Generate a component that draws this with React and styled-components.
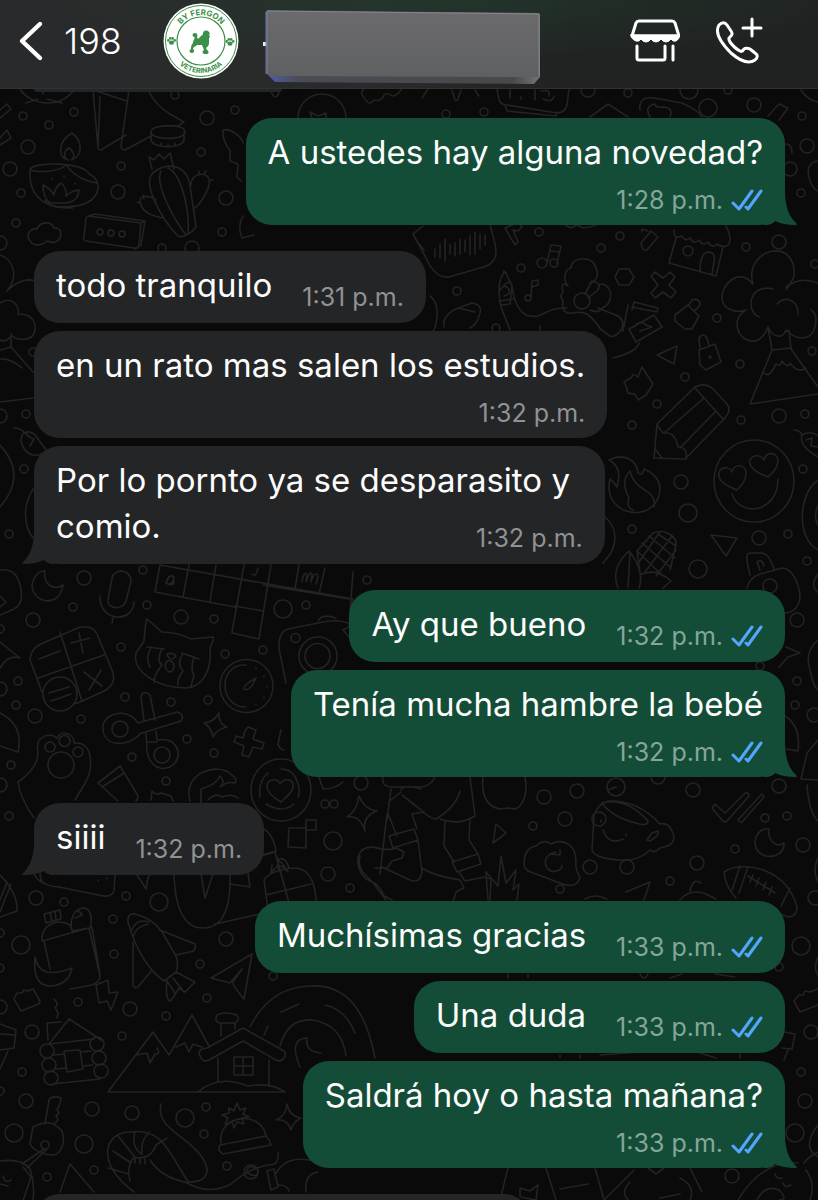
import React from 'react';
import styled, { createGlobalStyle, css } from 'styled-components';

const GlobalStyle = createGlobalStyle`
  * {
    box-sizing: border-box;
  }

  body {
    margin: 0;
    background: #0a0a0a;
    font-family: Inter, "Liberation Sans", sans-serif;
  }
`;

const colors = {
  incoming: '#242527',
  outgoing: '#144d37',
  tick: '#53a6fd',
};

const Page = styled.div`
  display: flex;
  flex-direction: column;
  height: 100vh;
  overflow: hidden;
  background: #0a0a0a;
`;

const Header = styled.header`
  display: flex;
  align-items: center;
  height: 89px;
  flex-shrink: 0;
  padding: 0 53px 6px 18px;
  border-bottom: 1px solid #303132;
  background:
    radial-gradient(ellipse 420px 60px at 56% 0, rgba(32, 62, 46, 0.6), transparent),
    linear-gradient(90deg, #292a2b 0%, #292b2b 45%, #212222 70%, #202121 100%);
`;

const BackButton = styled.button`
  display: flex;
  align-items: center;
  gap: 20px;
  padding: 0;
  border: 0;
  background: none;
  color: #fff;
  font-family: inherit;
  font-size: 36px;
  font-weight: 300;
  line-height: 40px;
  cursor: pointer;
`;

const Contact = styled.div`
  display: flex;
  flex: 1;
  align-items: center;
  gap: 24px;
  margin-left: 41px;
`;

const Actions = styled.div`
  display: flex;
  align-items: center;
  gap: 35px;
`;

const IconButton = styled.button`
  display: flex;
  padding: 0;
  border: 0;
  background: none;
  color: #fff;
  cursor: pointer;
`;

const Chat = styled.main`
  position: relative;
  display: flex;
  flex: 1;
  flex-direction: column;
  gap: 26px;
  overflow: hidden;
  padding: 0 33px 0 34px;
`;

const Backdrop = styled.svg`
  position: absolute;
  inset: 0;
  width: 100%;
  height: 100%;
  fill: none;
  stroke: #232324;
  stroke-width: 1.6;
  stroke-linecap: round;
  stroke-linejoin: round;
`;

const Group = styled.section`
  position: relative;
  display: flex;
  flex-direction: column;
  align-items: ${props => (props.$mine ? 'flex-end' : 'flex-start')};
  gap: 8px;
`;

const Bubble = styled.article`
  position: relative;
  max-width: 80%;
  padding: ${props => (props.$stacked ? '11px 22px' : '11px 22px 15px')};
  border-radius: 26px;
  background: ${props => (props.$mine ? colors.outgoing : colors.incoming)};
  ${props => props.$wide && css`
    width: 76%;
  `}
`;

const LastRow = styled.div`
  display: flex;
  flex-direction: ${props => (props.$stacked ? 'column' : 'row')};
  align-items: flex-end;
  justify-content: space-between;
  gap: ${props => (props.$stacked ? '9px' : '30px')};
`;

const Text = styled.p`
  margin: 0;
  color: #fcfcfc;
  font-size: 33px;
  line-height: 46px;
`;

const Meta = styled.div`
  display: flex;
  align-items: center;
  gap: 8px;
  height: 32px;
  margin-bottom: ${props => (props.$stacked ? '-2px' : '-5px')};
  color: ${props => (props.$mine ? '#86a698' : '#919293')};
  font-size: 25px;
  line-height: 32px;
  white-space: nowrap;
`;

const TailShape = styled.svg`
  position: absolute;
  bottom: 0;
  fill: ${props => (props.$mine ? colors.outgoing : colors.incoming)};
  ${props => (props.$mine ? 'right: -13px;' : 'left: -13px; transform: scaleX(-1);')}
`;

// edge of a message that is scrolled mostly out of view
const PartialBubble = styled.div`
  width: ${props => (props.$last ? '66%' : '33%')};
  height: ${props => (props.$last ? '72px' : '3px')};
  border-radius: ${props => (props.$last ? '26px' : '0 0 26px 26px')};
  background: ${colors.incoming};
`;

const groups = [
  {
    mine: true,
    messages: [{ lines: ['A ustedes hay alguna novedad?'], time: '1:28 p.m.', stacked: true }],
  },
  {
    mine: false,
    messages: [
      { lines: ['todo tranquilo'], time: '1:31 p.m.' },
      { lines: ['en un rato mas salen los estudios.'], time: '1:32 p.m.', stacked: true },
      { lines: ['Por lo pornto ya se desparasito y', 'comio.'], time: '1:32 p.m.' },
    ],
  },
  {
    mine: true,
    messages: [
      { lines: ['Ay que bueno'], time: '1:32 p.m.' },
      { lines: ['Tenía mucha hambre la bebé'], time: '1:32 p.m.', stacked: true },
    ],
  },
  {
    mine: false,
    messages: [{ lines: ['siiii'], time: '1:32 p.m.' }],
  },
  {
    mine: true,
    messages: [
      { lines: ['Muchísimas gracias'], time: '1:33 p.m.' },
      { lines: ['Una duda'], time: '1:33 p.m.' },
      { lines: ['Saldrá hoy o hasta mañana?'], time: '1:33 p.m.', stacked: true },
    ],
  },
];

// wallpaper dots, grouped by radius
const dots = {
  4: [
    [74, 112], [23, 116], [175, 95], [235, 110], [49, 125], [21, 193], [121, 166], [201, 152], [222, 232],
    [162, 248], [16, 223], [446, 114], [484, 112], [628, 93], [728, 90], [802, 116], [801, 193], [620, 236],
    [601, 248], [746, 247], [717, 318], [815, 264], [539, 232], [521, 268], [457, 291], [496, 328], [740, 364],
    [685, 377], [657, 404], [632, 425], [741, 420], [805, 414], [812, 351], [803, 469], [632, 529], [788, 534],
    [807, 561], [143, 570], [73, 607], [147, 605], [214, 619], [306, 605], [367, 580], [121, 647], [225, 654],
    [263, 650], [18, 681], [16, 705], [81, 719], [125, 697], [171, 702], [208, 700], [187, 739], [132, 757],
    [214, 753], [11, 765], [9, 816], [166, 781], [334, 804], [0, 629], [797, 681], [795, 705], [760, 666],
    [325, 804], [350, 888], [533, 826], [765, 818], [787, 816], [735, 849], [670, 881], [560, 889], [64, 902],
    [126, 896], [113, 919], [0, 933], [114, 954], [200, 964], [0, 968], [273, 976], [207, 998], [78, 1002],
    [166, 1016], [122, 1036], [22, 1072], [0, 1091], [206, 1107], [204, 1134], [227, 1166], [94, 1170],
    [47, 1177], [779, 967], [801, 1072], [26, 414], [24, 469], [9, 534], [33, 352],
  ],
  7: [
    [28, 147], [10, 169], [118, 192], [207, 118], [226, 198], [192, 248], [0, 243], [588, 90], [754, 105],
    [807, 146], [790, 169], [779, 242], [779, 416], [681, 482], [759, 538], [770, 586], [84, 578], [33, 620],
    [181, 617], [0, 689], [35, 716], [0, 785], [797, 620], [814, 715], [693, 790], [658, 777], [779, 786],
    [361, 783], [328, 874], [544, 797], [565, 819], [590, 867], [697, 863], [803, 845], [36, 898], [226, 939],
    [130, 1009], [32, 1032], [0, 1007], [26, 1101], [92, 1109], [132, 1113], [251, 1172], [811, 1032],
    [805, 1101], [732, 1176], [815, 898], [0, 416], [577, 791], [599, 819], [627, 867],
  ],
  9: [
    [689, 90], [708, 108], [688, 513], [698, 569], [283, 609], [333, 841], [159, 902], [21, 945], [185, 1118],
    [14, 1133], [84, 1144], [801, 946], [795, 1133], [616, 787],
  ],
};

const doodles = [
  // wheel and open book
  'M20 89c9 15 38 22 55 0 M43 89v5 M38 99l-12 4 M47 99l15 4',
  'M93 90l5 58q2 4 6 0l22-13 M93 90l34 11 M100 97l-2 48 M129 90l-8 56q0 4 4 4l26-14 M148 90q8 16 22 24l14 8-6 4h-12',
  // bowl
  'M151 132c0-8 34-9 34 0s-34 8-34 0v8c2 9 31 9 33 0v-8 M161 143v3 M168 144v3 M175 143v3',
  // ticket stubs
  'M0 110l7-6 4 5-11 9 M0 138l7-8 4 8-11 7',
  // lamp
  'M30 170c1-9 55-8 59 4 6 2 10 9 9 15-3 15-20 18-35 18-20 0-35-13-33-37z M30 170c9 3 28 2 36-5 5 6 12 15 31 18 M68 160c-10-2-11-18 4-27 12 9 10 24-1 27 M68 160c-6-3-3-10 1-12 6 4 6 10 2 12',
  'M43 185q7 3 11 10 1-8 7-12 6 5 5 13 5-5 13-6-1 12-13 13H50q-7-5-7-18z M45 200q2 8 28 8 M52 178v1 M64 176v1 M75 183v1',
  // cloud
  'M31 242c-7-8 0-14 6-13 3-8 15-8 17-1 9-1 8 10 3 13-4 4-7 0-10 0-5 5-14 5-16 1z',
  // cactus
  'M178 236c-15-15-38-54-24-64 13-10 33-8 36 14l6 40c-1 5-14 13-18 10z M161 171c-6 12 10 44 25 64 M168 168c14 6 22 44 20 66 M152 169l-3-12 5 3 5-6 5 5 6-6 4 16 M191 185c0-11 12-13 17-8 6 7-8 27-13 31 M156 200c-8-6-17-4-16 2 2 11 13 14 23 16',
  'M199 174v-3 M204 174l2-3 M210 180l3 0 M144 199l-1-4 M140 203l-3-1',
  // cassette box
  'M88 216l53 7-2 22q-1 4-5 3l-48-7q-3 0-2-4l2-19z M88 216l7-2 50 7-4 24-6 4 M141 223l4-2 M97 232a3 3 0 1 0 6 0 3 3 0 1 0-6 0 M108 233a3 3 0 1 0 6 0 3 3 0 1 0-6 0 M119 234a3 3 0 1 0 6 0 3 3 0 1 0-6 0',
  // fox and leaf by the first message
  'M223 130c6-2 18 5 20 13 M223 130c-1 8 3 16 7 20v11l8 3-1 13 4 4 M243 216q-6 10-1 22l12-3',
  'M0 255c12 4 20 20 7 36 M7 291c12-12 24-13 30-9 M0 303c12-8 20 4 18 11q18 0 17 16-2 11-15 9-6 0-9-5',
  'M0 340q6 3 11-4v11l22 25 M0 350l12-3 M0 359q10-1 22 9 M0 402l33-4',
  'M14 428q8 0 10 5 8-4 14 6l9 12-8 4q-14 2-18-14 0-8 5-8 3 5 8 6l-4 7 M0 445q28 30 0 62 M34 488q-14 20-5 44l4 6',
  // badge, clock, little things below the header
  'M298 118a24 24 0 0 1 48 0 M312 118l-2-6 8 4 8-3 0 5 M270 89q6 16 10 0',
  'M366 100c-10-8 0-16 6-12h30q-4 8-10 8-4-4-8-1-3 7-10 5-5 6-8 0z',
  'M422 98l6-9 M452 90l3 10q3 2 4-4l2-6 M475 90l4 6',
  'M497 89l2 10q1 6 8 6l50 8q8 0 10-8l2-16 M510 90v8 M521 97v2 M535 90v10 M541 91q10-2 8 5 M543 99q10 4 11-3 M505 105l2 6 49 5 1-4',
  'M590 117l18-13 20 13 M640 110q-2-14 14-12l28 5q16 7 20 14 M650 117q-6-10 4-13 3 4 8 3 12 0 8 10 M801 90q6 10 17 12 M768 116l11-12 9 4-9 12',
  'M786 144q6 0 6 9 M818 161q-14 2-8 20 3 8 8 10',
  // voice note
  'M413 234l12 22q10 23 24 21l31-9q20-4 15-24l-5-20 M413 234l10-8 M435 249v8 M440 244v14 M445 239v22 M450 244v10 M455 243v13 M460 239v15 M465 240v12 M470 235v20 M475 232v22 M480 234v15 M485 235v10',
  'M416 240l8 10 M505 228l14-6 3 5-4 4-5-1 5 12-3 3z M565 225l6 3 6-3 6 3 7-1 6-2',
  // notes
  'M547 263l4-18 10 1-4 17 M550 251l10 1 M537 263a4 4 0 1 0 10 0 4 4 0 1 0-10 0 M550 263a4 4 0 1 0 8 0 4 4 0 1 0-8 0 M531 297l1-16 6-1 0 5-6 2 M525 298a3 3 0 1 0 6 0 3 3 0 1 0-6 0',
  // arm with flowers
  'M510 330l-9-23q-5-25 3-34-1-4 2 0l6 13-2 18-8 1 M504 285q6-6 8 1 4 34 26 30c12-5 14-8 29-8 M500 290q4-6 8-2 4 6-4 8 M499 301l14-2',
  'M568 286c-7-8-1-18 3-18 0-12 22-12 24-2 6 10-1 17-5 17 M568 286q-8-6-5 6-4 4 0 9 M574 301a8 8 0 1 0 16 0 8 8 0 1 0-16 0 M585 294l7-13q10 2 6 9l-10 8 M600 284c14 0 14 20 2 24q-4 6-12 2 M563 301q-2 14 10 12 8-2 14 1 8 6 14 16 M598 308l20 8q8 5 3 14-6 8-11 6l-8-6',
  'M444 327q-2-12 14-19l14-5q12 2 7 13-2 8-9 12 M458 308l17 4 M430 296q8 6 7 20-1 12-4 15 M540 326v5',
  // ribbon
  'M641 243l10-12 7 6-11 13q-5 1-6-7z M648 231q-8-4-6 1',
  // shop
  'M674 230q-1 10 8 6 3 6 8 2 4 7 9 2 4 7 9 2 4 7 9 2 7 5 12 0 3-8-4-20 M676 238l-7 25 47 13 7-29 M700 271q0-18 8-19 8 0 6 10l-2 12 M683 251a5 5 0 1 0 10 0 5 5 0 1 0-10 0',
  // hexagon, cross, locks
  'M619 269h10l5 8-5 8h-10l-4-8z',
  'M651 276l4-4 8 6 7-6 5 5-6 8 7 7-5 6-8-6-8 6-4-5 7-8z',
  'M675 315l13-10 11 11-7 13-7 0-10-8z M688 306l4-6q6-2 8 3 0 4-5 7',
  'M699 350l16-6 6 18-15 8-6-5z M700 348l-1-10q4-6 8 0l2 8 M709 357a1 1 0 1 0 2 0 1 1 0 1 0-2 0',
  // hand with card
  'M632 310l2-8 24 6-1 4-25-5 M628 305l-5 26 M629 329l25-14 8 12-26 15-7-13z M634 327q6-8 12-2l6 2-12 4 M613 358q24-6 26-15',
  'M657 355l20-9-3 18z',
  'M624 382l8-5q0-5 6 0l4-10 11 17-7 11-8 5-3-6q-10 0-8-6z',
  // tree and volcano
  'M753 284c-10-35 44-49 41-8q-2 6-8 14 M753 284c-15-18-32 2-31 14 0 10 12 16 24 12 M786 287q14-11 32-4 M746 310c-15 8-10 30 6 31 8 1 14-8 16-14 5 11 15 12 18 3 12 12 30 12 30-12q-1-6-5-8 M773 289c-24-6-28 22-14 28 M777 304c10-10 22-2 21 11 M768 327l4 23-22 54 68-10 M789 330l2 19 27 38 M772 350l19-2 M764 373q5 6 12-9 4 4 6-3 6 8 8 2 8 11 16 5',
  // pencil
  'M654 458l3-34 38-37q10-5 18 2l14 15q5 6-2 14l-40 41z M695 388l29 32 M704 398l-40 35 M716 411l-36 37 M657 425l6 8q12-2 15 14 10 0 8 12 M655 449l7 9',
  // heart-eyes
  'M714 481a39 40 0 1 0 80 0 39 40 0 1 0-80 0 M737 490q-16-6-18-13c-2-10 10-12 13-5 2-9 14-8 14 1 0 8-4 12-9 17z M768 477q-16-6-18-13c-2-9 10-11 14-4 2-9 13-8 14 0 0 7-5 13-10 17z M732 494c8 24 46 19 46-15',
  'M794 430q6 0 8 5 9-5 16 1 M802 435q-4 10 16 22 M806 440l6-2-1 8 7 1 M818 480c-20 14-22 58 0 70 M818 505q-5 12 0 20',
  // flame
  'M609 460c16-8 28 1 29 13q5 3 6-4c8 3 16 10 16 20-2 36-59 29-50-10q4 3 7 8 6-20-8-27z M633 510q-7-2-4-12-9-17 1-27c5 22 28 18 24 36',
  'M605 517q16 14 6 36l-8 10',
  // corn
  'M640 573l-3-22 16-18q10-3 14 0 10 4 9 12l-6 25 M618 588q-8-20 11-37 16 20 10 37 M630 553l-2 34 M640 575q16-8 31 6l-8 7 M637 551l26 25 M642 543l28 24 M649 536l26 22 M658 534l18 12 M639 562l20-29 M645 572l27-36 M656 576l20-26',
  'M711 535l26 3-11 18z M750 575c-6-24-4-22 7-22 10-1 12 3 17 16 M760 570l-3-8q5-4 7 4 M747 588q2-10 13-14l22-6c12 0 18 20 18 30q-2 14-15 15',
  // letter tiles
  'M160 565l-5 27 80 15 M160 565l193 34-4 27 4-54 M189 565l-6 32 M216 565l-6 36 M244 565l-12 67 M271 565l-12 74-27-6 M235 606l28 5 M263 585l86 14 M299 565l-4 24 M325 568l-6 26 M349 599l-86-16',
  'M166 583q3-10 8-6-2 10-8 6 8 4 8-2 M302 582q2-12 5-7l-1 7q4-12 6-8l-1 8q4-12 7-6l-2 8 M252 574q4 4 6-6',
  // microphone, moon
  'M108 600l4-22c2-10 19-9 19 3l-5 20c-3 10-19 8-18-1z M100 596c-1 26 33 28 34 6 M113 618l-1 5',
  'M45 571q-10 0-13 14c0 18 28 24 31 0-9 6-20 0-18-14z M0 570q16-2 20 15 5 18-6 24l-14 6 M0 596l6 6-6 5 M0 642l20 16q-12-4-20 10',
  // calculator
  'M31 654q3-7 10-10l32-14q18-8 24 4l15 36q6 15-10 22l-22 10q-4 2-6 1 M31 654l-1 6 12 32 M60 632l22 69 M38 678l66-23 M39 659l21-8 M71 643l19-5 M79 633l4 20 M84 672l18 14 M101 670l-12 20 M43 694a17 17 0 1 0 34 0 17 17 0 1 0-34 0 M49 693l20-6 M51 701l20-7',
  // cat
  'M144 641q2-24 3-22l15 13q15 0 29 7l22-2q2 0-3 11c2 20-6 39-24 40-28 0-54-16-50-35z M147 647l17 2 M182 653l17 6 M151 647q-6 12-1 20 M162 649q-6 12 0 16-8 10-8 17 M183 654q-7 9 0 17-6 8-5 14 M194 657q-4 12 0 18l-3 11 M167 654q6-2 9 2-6 7-9-2z M165 667q1-8 6-6 5 3 2 9-4 5-8-3z',
  // gauge
  'M220 686a26 26 0 1 0 53 0 26 26 0 1 0-53 0 M246 665c-28-2-28 42 0 42 M244 689q-1-4 12-11-6 14-12 11z M256 668v1 M264 676v1 M267 686v1 M264 697v1 M256 704v1',
  // camera
  'M286 683l-7-34q-1-17 9-20l30-6q26-6 35 4 M318 621q4-8 18-3 M353 625l-10 5 11 13 M299 656a18 18 0 1 0 38 0 18 18 0 1 0-38 0 M305 656a12 12 0 1 0 25 0 12 12 0 1 0-25 0 M291 638a4 4 0 1 0 9 0 4 4 0 1 0-9 0',
  // scissors
  'M144 721l-3-24q2-8 9-2l5 25 M138 723l39-11q8 2 4 9l-42 13 M137 722c-10-16-37-8-34 8 2 18 26 16 36 5 M112 729a8 8 0 1 0 16 0 8 8 0 1 0-16 0 M146 733l1 18c4 26 34 20 31 0q-4-14-21-11l-1-9 M154 755a8 8 0 1 0 16 0 8 8 0 1 0-16 0 M147 742h10',
  // sparkle and plus
  'M219 713q-1 10 8 14-10 2-14 10-2-10-9-14 10-1 15-10z M245 731l3-4 8 3-3 9 11 4-2 6-9-2-4 10-7-2 2-9-10-4 2-6 7 2z',
  'M359 796q6 14 18 15-15 5-12 20-5-16-18-14 10-6 12-21z M281 730l-3 14q2 6 6 6 M0 713q24 12 18 39l-18-6',
  // paw
  'M34 818q-14-20-16-36 20-14 20-29c-4-20 15-20 19-15 4-9 18-4 17 5 20-2 20 26 10 42l-9 15 M45 747a5 5 0 1 0 10 0 5 5 0 1 0-10 0 M59 741a5 5 0 1 0 11 0 5 5 0 1 0-11 0 M73 752a5 5 0 1 0 10 0 5 5 0 1 0-10 0 M48 765a12 12 0 1 0 26 0 12 12 0 1 0-26 0',
  // cup, cap, heart token
  'M98 783l22-17 17 28q2 4-1 7 M102 787l22-14 M98 783l20 18 M151 800l1-9q4 5 9 2l10 3 2 5 M190 801c-8-28 28-40 42-26q6 4 3 8-8-2-15 4 6-5 0-11-4 9-19 13l0 14 M208 800q8-8 14-3 10-4 16 1',
  'M251 790a29 30 0 1 0 60 0 29 30 0 1 0-60 0 M268 773q-10 8-8 24 M281 769q12 0 16 12 4 10 1 16 M266 804q16 10 28 0 M281 802q-14-8-14-16c1-8 11-8 13-2 4-6 14-6 13 3q-1 6-12 15z',
  'M319 777l4 12q12 0 20-7 M289 828h17v20l-18-1z M306 820h10v10h-10z M259 826q14 6 17 25l-17 5 M258 857l17-5 16 58 M272 865l-1 8q6-9 12-6l5 5-6-9q-4-1-5-6',
  // walking legs
  'M383 777q-2 11 12 10h25q10 0 15-10 M391 789l-4 31 M401 790q3-6 20-1 M402 795l18 14q10 10 16 10 20-12 24-28 M470 777l5 39q-16 10-35 3 M391 800l10-8 M388 814l9 22 M412 814l5 15 M412 814l12-2 M387 814l-7 60 M375 868h12 M389 836l25-7 4 11-25 8z M396 848l8 4-2 6-10 3-4 6 M418 840l4 32q-2 12-12 8l-28-13 M445 821l-1 25 10 16 M470 818l-1 22 9 14 M452 862l26-8 3 10-24 8z M459 872l6 9 20-4 M422 868q12 8 38 12l4 8-8 4-3 10 M485 877l6 2-1 22',
  'M396 848c-14 6-22-6-34 2-10 10 0 28 6 30q12 4 16 16l8 4 M360 856c-4 16 10 22 14 28l12 16',
  'M488 900l-2-28 12 14 3-30 5 27 10-13-3 20 6-6-2 16',
  // apple, small arrow, cloud arrow
  'M483 777q-3 28 17 32l8-1q10 3 14-5 6-10 3-26 M496 824l10 9-13 10z',
  'M524 864q0-16 12-18c6-6 12-5 15-2 12-6 25 0 25 17-2 12 7 16 3 19-4 8-12 6-19 3l-32-12q-4-3-4-7z M556 852l-6 2c-10 8-2 20 6 17q6-1 6-6 M550 854l10 1 0-5',
  // mug
  'M592 850l2-35q6-14 17-14 28 0 49 23 8-2 12 7 7 14-12 17-6 6-10 2-12 12-32 10-24-2-26-10z M602 803q24-6 46 18 0 6-12 2-24-6-34-20z M652 833l6-2q2 4-8 10l-3-1 5-7z M601 820v2 M626 834v2 M603 830q6 16 20 9 M608 790l8-3',
  // read ticks
  'M712 808l3-4 10 9 20-20q4-1 4 3l-22 25q-3 2-5-1z M738 820l22-24q2-4 4 1l-22 25q-3 1-4-2z',
  // moon, football
  'M769 829q-12-1-14 13c0 20 30 18 29 1-8 6-17-4-15-14z M724 872c18-12 62-5 73 35q0 9-8 10l-12-4 M724 872q1 14 12 26 M740 866l-8 24 M748 867l-9 26 M790 888l-9 18 M748 876l27 17 M753 875l-3 7 M759 878l-3 8 M766 882l-3 8 M772 887l-3 8',
  'M626 892l24-10-6 18 M690 891q3-14 11-8 M680 900q10-12 26-6l10 5 M585 899q10-6 22 0 M807 785q2 28 11 36 M818 858q-6 12 0 24',
  // edges beside the outgoing bubbles
  'M786 647l14 6-12 4-9 10 M785 716q16 10 13 35l-12-2 M818 780l-17-1 6-26 11-13 M818 574q-8 10-1 18 M818 640q-14 12-8 30 3 16 8 20',
  // game pad
  'M34 874q6 12 25 13l44 9q10 1 11-6l1-15 M40 872q0 12 6 12 M98 880v1 M107 878v1 M0 875q18 18 17 36l-17 6 M0 912l11-28 M0 900l7-18 M137 875l4 6 5 8 2-12 6-5',
  // backpack
  'M42 941q-1-16 16-19 14 0 14 9l17-3 11 48q0 6-8 9l-22 4 M42 941l47-13 M89 928l3-1 8 48 M44 941l6 28 M44 914l16-4 1 9-15 4z M50 913l2 8 M55 911l1 9 M71 928q0-20 14-20 9 4 5 20 M75 918l7-3 M78 911l4 3 M35 957q4 24 37 11-3 16-20 18-20 1-17-29z',
  // rocket
  'M128 922q-1-9 7-8 17 4 27 18l14 24q3 8 0 16l-12 9q-24-17-36-59z M132 930q4-12 17-8 M134 935q2-8 14-11 M160 930l35 14q2 7-5 8l-14 3 M133 942v42q0 5 5 3l14-17 M176 972l19 10-10 10-6-4q-4 8-9 13-5-2-3-20 M173 978l11 14 M167 981l8 12',
  // sack and bottle
  'M174 875q2 54 30 53 24 0 26-42l0-12 M201 874l4 24 8-24 M215 924l45-10 M230 884l20 3-2-14 M268 910l-4-30q6-10 30-12 20 0 22 32 M266 895l45-11 M277 865l3 7 M277 860q8-5 12 8',
  // lightning, plane, brick
  'M96 985l12-5 1 13 9-1-7 18-4-9-8 2z M211 978l41-24-8 45q-12-14-11-17l9-13-12 14z',
  'M14 999l3-6 5 0 2-3 4 1 5-2 7 12q0 3-4 4l-15 6q-6-10-7-12z M54 999q6 6 1 8l3 6-1 5 M0 1024l16 6-2 18-14 2 M0 1034l15 1 M8 1051l-8 18',
  // log cabin
  'M49 1044l20-25 34 22 M48 1040l-1-17 14-1 M50 1044l44-5 M40 1051a7 7 0 1 0 14 0 7 7 0 1 0-14 0 M42 1065a7 7 0 1 0 14 0 7 7 0 1 0-14 0 M44 1078a7 7 0 1 0 14 0 7 7 0 1 0-14 0 M90 1044a7 7 0 1 0 14 0 7 7 0 1 0-14 0 M92 1058a7 7 0 1 0 14 0 7 7 0 1 0-14 0 M94 1071a7 7 0 1 0 14 0 7 7 0 1 0-14 0 M54 1055l10-1 M82 1052l9-1 M56 1069l10-1 M84 1066l9-1 M52 1084l48-5 M64 1051l16-1 3 19-16 3z',
  // mountains and house
  'M108 1092l45-60 16 23 23-40 17 31 M108 1092h177q-14-10-37-6-30-12-50 6 M136 1055l11-2 3 10 5-9q6 1 2-6 M176 1047l9-4 4 9 4-8 9 3 M218 1058v23 M269 1060v25 M200 1056c-3-6 3-8 7-8l36-20 41 23c4 6-3 12-8 9l-33-19-34 19q-7 3-9-4z M221 1023v13 M235 1024v5 M217 1015q8-4 20 0 3 6-2 8h-16q-5-2-2-8z M234 1057h19v18h-19z M243 1057v18 M234 1066h19',
  // rainbow
  'M250 1027q20-40 60-41c34-2 55 20 65 72 M280 1046q8-28 32-26 30 4 34 36 M281 1012l18-8 M264 1035l4-9 M300 1067q-12-28 7-29-2 14 14 15 M325 1005q20 4 30 28',
  // key
  'M45 1124l4-24q2-5 12-2-1 8-4 11l2 4-3 3 2 4-4 4 M33 1127c12-6 20-6 29 4 4 12-1 22-8 24-8 1-24-6-24-12z M41 1145a4 4 0 1 0 8 0 4 4 0 1 0-8 0 M44 1149l-22 15 M47 1149l-20 19 M0 1161q22-3 30 8 5 16 3 31 M23 1167l8 10-8 24 M0 1184l8 2 M3 1176q2 8 8 4',
  // shrimp
  'M134 1192c-40-30-29-60-4-60 32-4 38 18 58 50 10 0 20-2 19-14-8-30-53-36-46-64 M130 1181q-4-14 4-24 16 4 22-12l11-7 M113 1151l18 12 M108 1168l21 6 M118 1136l16 20 M135 1132q-4 14 6 22 M150 1132q-10 8-8 22 M135 1163v-5 M140 1164v-5 M145 1164v-5 M150 1160q10 16 34 22 M185 1182q24 14 46 2 20-18 44-20 4-4 3-12 M246 1172q4-10 12-2 0 10-12 2 M60 1192l10-28 24 28',
  // beanie
  'M221 1143c-4-28 40-34 45-7 M220 1145l46-9q4 4 5 9l-48 9q-6-4-3-9z M229 1108l5 3 3-8 3 7 6-2-3 6 6 3-7 1 2 6-7-2-3 6-2-6-7 2 3-6-6-3 7-2z M287 1104q2 12 14 14-8 4-10 12-4-12-15-10 10-4 11-16z',
  'M267 1171l7-2 4 18-7 3z M276 1173c10-18 30-14 40-12 M279 1185q8 0 10 6 M306 1192q-2-18 12-20',
  // small things along the right margin
  'M818 957q-6 12 2 22 M794 1001l5-6 4 0 2-4 5 1 8-3 M794 1001l6 11 18-7 M785 1032l10 2-3 15-10-1 M788 1050l-4 10 M818 1125q-14 18-5 28l5 4 M804 1163q4-6 14-11 M806 1170q10 14 4 30 M738 1200q24-40 60-37 M775 1174q2 6 7 4 M783 1183q2 6 8 2 M757 1200q8-16 22-10 10 10 0 10',
  'M508 1168l-8 32 M546 1168l10 32 M560 1189l28-5 M595 1168l9 32 30-30 M630 1182q-10 10-2 18 M648 1168l8 6 8-6 M680 1178q16 8 10 22 M660 1198l20-4 M520 1188l10 3 8-6-2 15-16-3z M690 1168l12 24',
  'M508 974v4 M528 974v4 M640 974q4 8 8 0 M670 978l12-4 M715 974l20 3 M560 1055v3 M580 1055v3 M600 1055l40-3 M700 1053l16 5 M740 1054v4',
];

const circleRows = Object.entries(dots);

const Wallpaper = () => (
  <Backdrop viewBox="0 89 818 1111" preserveAspectRatio="xMidYMin slice" aria-hidden="true">
    {circleRows.map(([r, points]) => points.map(([x, y]) => <circle key={`${x}-${y}`} cx={x} cy={y} r={r} />))}
    {doodles.map(d => (
      <path key={d} d={d} />
    ))}
  </Backdrop>
);

const Paw = ({ x, y }) => (
  <g transform={`translate(${x} ${y})`} fill="#3b8f48">
    <ellipse cx="0" cy="1.6" rx="2.6" ry="2.2" />
    <circle cx="-3.2" cy="-0.6" r="1.3" />
    <circle cx="-1.2" cy="-2.6" r="1.3" />
    <circle cx="1.2" cy="-2.6" r="1.3" />
    <circle cx="3.2" cy="-0.6" r="1.3" />
  </g>
);

const Avatar = () => (
  <svg width="76" height="76" viewBox="-38 -38 76 76" role="img" aria-label="By Fergon Veterinaria">
    <defs>
      <path id="arcTop" d="M-26 0a26 26 0 0 1 52 0" />
      <path id="arcBottom" d="M-32 0a32 32 0 0 0 64 0" />
    </defs>
    <circle r="37.5" fill="#fff" />
    <circle r="35.5" fill="none" stroke="#3b8f48" strokeWidth="1" />
    <circle r="24" fill="none" stroke="#3b8f48" strokeWidth="1.2" />
    <g fill="#3b8f48" fontFamily="Inter, sans-serif" fontWeight="700" textAnchor="middle">
      <text fontSize="8">
        <textPath href="#arcTop" startOffset="50%">BY FERGON</textPath>
      </text>
      <text fontSize="7">
        <textPath href="#arcBottom" startOffset="50%">VETERINARIA</textPath>
      </text>
    </g>
    <Paw x={-29.5} y={0} />
    <Paw x={29} y={1} />
    <path
      fill="#3b8f48"
      d="M0-5c1-1 2-1 2-3 1-3 4-3 6-1 1 1 1 2 0 3l1 2-1 1v5c0 3-2 4-3 5l1 2c2 1 2 4 0 4H3c-2-1-2-3 0-4L1 4H-4c-1 1-4 2-4 4 2 1 1 4-1 4-3 0-3-3-1-4 0-2 0-4 2-6 0-2 1-4 2-5L-7-4c-2-1-2-4 1-4 2 0 3 2 2 4l1 2z"
    />
  </svg>
);

const NameCover = () => (
  <svg width="279" height="88" viewBox="262 -3 279 88" aria-label="Contact name hidden" role="img">
    <defs>
      <linearGradient id="coverFace" x2="0" y2="1">
        <stop offset="0" stopColor="#6b6b6d" />
        <stop offset="1" stopColor="#5f6062" />
      </linearGradient>
      <linearGradient id="coverEdge">
        <stop offset="0" stopColor="#4d5fa8" />
        <stop offset="0.12" stopColor="#4a4b54" />
        <stop offset="0.9" stopColor="#48494b" />
        <stop offset="1" stopColor="#737476" />
      </linearGradient>
    </defs>
    <path d="M262 42h5v4h-5z" fill="#eee" />
    <path d="M265 12l2-2 271 3 1 2v62l-6 7-259-2-8-8z" fill="url(#coverEdge)" />
    <path d="M266 11l272 2v64l-268-1-4-3z" fill="url(#coverFace)" />
    <path d="M266 74V11l272 3v62" fill="none" stroke="#858689" strokeWidth="1" />
    <path d="M265 74V12" stroke="#6d76ad" strokeWidth="1" />
  </svg>
);

const ShopIcon = () => (
  <svg width="50" height="44" viewBox="631 19 50 44" fill="none" stroke="currentColor" strokeWidth="3" strokeLinecap="round" strokeLinejoin="round">
    <path d="M637 23q1-2 3-2h33q2 0 3 2l4 13H633z" />
    <path d="M632 35h48q1 4-3 6-3 1-5-2-2 3-5 3t-5-3q-2 3-5 3t-5-3q-2 3-5 3t-5-3q-2 3-5 2-5-2-5-6z" fill="currentColor" strokeWidth="1" />
    <path d="M638 46v12q0 2 2 2h24q2 0 2-2V46M674 46v14" />
  </svg>
);

const CallIcon = () => (
  <svg width="50" height="48" viewBox="715 17 50 48" fill="none" stroke="currentColor" strokeWidth="3" strokeLinecap="round" strokeLinejoin="round">
    <path d="M719 25c3-3 6-3 8 0l4 6c2 3 1 4-1 6-2 1-1 3 0 5 3 4 6 7 10 9 2 1 3 0 4-2 1-1 4-1 6 0l5 4c3 2 3 4 0 7-7 5-16 0-24-7-8-8-17-20-12-28z" />
    <path d="M752 19v17M743 28h18" />
  </svg>
);

const ReadTicks = () => (
  <svg width="32" height="22" viewBox="0 0 32 22" fill="none" stroke={colors.tick} strokeWidth="3" strokeLinecap="round" strokeLinejoin="round" role="img" aria-label="Read">
    <path d="M2 14l6 6L21 2M15 18l2 2L30 2" />
  </svg>
);

const Tail = ({ mine }) => (
  <TailShape $mine={mine} width="34" height="34" viewBox="0 0 34 34" aria-hidden="true">
    <path d="M0 34h3q6-1 8-4 8 4 20 4 2 0 2-1-12-10-12-33H8z" />
  </TailShape>
);

const Message = ({ mine, lines, time, stacked, tail }) => (
  <Bubble $mine={mine} $stacked={stacked} $wide={lines.length > 1}>
    {lines.slice(0, -1).map(line => (
      <Text key={line}>{line}</Text>
    ))}
    <LastRow $stacked={stacked}>
      <Text>{lines[lines.length - 1]}</Text>
      <Meta $mine={mine} $stacked={stacked}>
        <time>{time}</time>
        {mine && <ReadTicks />}
      </Meta>
    </LastRow>
    {tail && <Tail mine={mine} />}
  </Bubble>
);

const App = () => (
  <Page>
    <GlobalStyle />
    <Header>
      <BackButton type="button" aria-label="Back, 198 unread chats">
        <svg width="26" height="42" viewBox="0 0 26 42" fill="none" stroke="currentColor" strokeWidth="4.4" strokeLinecap="round" strokeLinejoin="round">
          <path d="M22 4L4 21l18 17" />
        </svg>
        198
      </BackButton>
      <Contact>
        <Avatar />
        <NameCover />
      </Contact>
      <Actions>
        <IconButton type="button" aria-label="Shop">
          <ShopIcon />
        </IconButton>
        <IconButton type="button" aria-label="New call">
          <CallIcon />
        </IconButton>
      </Actions>
    </Header>
    <Chat>
      <Wallpaper />
      <Group>
        <PartialBubble />
      </Group>
      {groups.map((group, g) => (
        <Group key={g} $mine={group.mine}>
          {group.messages.map((message, i) => (
            <Message
              key={i}
              {...message}
              mine={group.mine}
              tail={i === group.messages.length - 1}
            />
          ))}
        </Group>
      ))}
      <Group>
        <PartialBubble $last />
      </Group>
    </Chat>
  </Page>
);

export default App;
